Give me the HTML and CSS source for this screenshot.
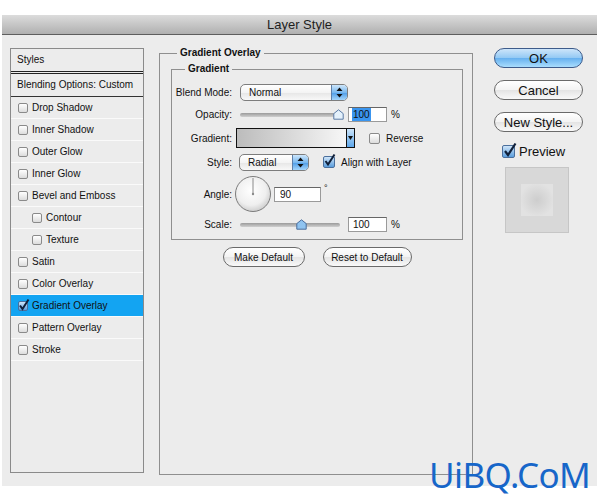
FILE: index.html
```html
<!DOCTYPE html>
<html lang="en">
<head>
    <meta charset="UTF-8">
    <meta name="viewport" content="width=device-width, initial-scale=1.0">
    <title>Layer Style</title>
    <link rel="stylesheet" href="styles.css">
</head>
<body>
    <div class="window">
        <div class="titlebar">Layer Style</div>
        <div class="content">

            <!-- Style list -->
            <div class="style-list">
                <div class="list-head">Styles</div>
                <div class="list-blend">Blending Options: Custom</div>
                <div class="list-item"><span class="check"></span>Drop Shadow</div>
                <div class="list-item"><span class="check"></span>Inner Shadow</div>
                <div class="list-item"><span class="check"></span>Outer Glow</div>
                <div class="list-item"><span class="check"></span>Inner Glow</div>
                <div class="list-item"><span class="check"></span>Bevel and Emboss</div>
                <div class="list-item sub"><span class="check"></span>Contour</div>
                <div class="list-item sub"><span class="check"></span>Texture</div>
                <div class="list-item"><span class="check"></span>Satin</div>
                <div class="list-item"><span class="check"></span>Color Overlay</div>
                <div class="list-item selected">
                    <span class="check on">
                        <svg width="12" height="13" viewBox="0 0 12 13"><path d="M2 7.5L4.5 11L10.5 1.5" fill="none" stroke="#10203a" stroke-width="2"/></svg>
                    </span>Gradient Overlay
                </div>
                <div class="list-item"><span class="check"></span>Pattern Overlay</div>
                <div class="list-item"><span class="check"></span>Stroke</div>
            </div>

            <!-- Gradient overlay settings -->
            <fieldset class="group outer">
                <legend>Gradient Overlay</legend>
                <fieldset class="group inner">
                    <legend>Gradient</legend>

                    <div class="row r-blend">
                        <span class="label">Blend Mode:</span>
                        <div class="select blend-select">
                            <span class="select-text">Normal</span>
                            <span class="stepper">
                                <svg width="7" height="11" viewBox="0 0 7 11"><path d="M3.5 0.5L6.5 4H0.5Z M3.5 10.5L6.5 7H0.5Z" fill="#111"/></svg>
                            </span>
                        </div>
                    </div>

                    <div class="row r-opacity">
                        <span class="label">Opacity:</span>
                        <div class="slider">
                            <span class="thumb" style="left: 93px">
                                <svg width="11" height="11" viewBox="0 0 11 11"><path d="M5.5 0.8L10.2 4.6V10.2H0.8V4.6Z" fill="#e4f1fc" stroke="#5a7aa5"/></svg>
                            </span>
                        </div>
                        <div class="field"><span class="selected-text">100</span></div>
                        <span class="unit">%</span>
                    </div>

                    <div class="row r-gradient">
                        <span class="label">Gradient:</span>
                        <div class="swatch">
                            <span class="swatch-arrow">
                                <svg width="5" height="4" viewBox="0 0 5 4"><path d="M0 0H5L2.5 4Z" fill="#111"/></svg>
                            </span>
                        </div>
                        <span class="check row-check"></span>
                        <span class="check-label">Reverse</span>
                    </div>

                    <div class="row r-style">
                        <span class="label">Style:</span>
                        <div class="select style-select">
                            <span class="select-text">Radial</span>
                            <span class="stepper">
                                <svg width="7" height="11" viewBox="0 0 7 11"><path d="M3.5 0.5L6.5 4H0.5Z M3.5 10.5L6.5 7H0.5Z" fill="#111"/></svg>
                            </span>
                        </div>
                        <span class="check on row-check align-check">
                            <svg width="13" height="14" viewBox="0 0 13 14"><path d="M2.5 8L5 11.5L11.5 1.5" fill="none" stroke="#10203a" stroke-width="2"/></svg>
                        </span>
                        <span class="check-label">Align with Layer</span>
                    </div>

                    <div class="row r-angle">
                        <span class="label">Angle:</span>
                        <svg class="dial" width="38" height="38" viewBox="0 0 38 38">
                            <defs>
                                <radialGradient id="dialFill" cx="0.45" cy="0.4" r="0.6">
                                    <stop offset="0" stop-color="#ffffff"/>
                                    <stop offset="0.7" stop-color="#efefef"/>
                                    <stop offset="1" stop-color="#cfcfcf"/>
                                </radialGradient>
                            </defs>
                            <circle cx="19" cy="19" r="17.5" fill="url(#dialFill)" stroke="#7c7c7c"/>
                            <line x1="19" y1="19" x2="19" y2="3" stroke="#8a8a8a"/>
                            <circle cx="19" cy="19" r="1.2" fill="#8a8a8a"/>
                        </svg>
                        <div class="field angle-field">90</div>
                        <span class="degree">°</span>
                    </div>

                    <div class="row r-scale">
                        <span class="label">Scale:</span>
                        <div class="slider">
                            <span class="thumb" style="left: 56px">
                                <svg width="11" height="11" viewBox="0 0 11 11"><path d="M5.5 0.8L10.2 4.6V10.2H0.8V4.6Z" fill="#8fc3f0" stroke="#4a6d9c"/></svg>
                            </span>
                        </div>
                        <div class="field">100</div>
                        <span class="unit">%</span>
                    </div>
                </fieldset>

                <div class="default-buttons">
                    <button class="pill make">Make Default</button>
                    <button class="pill reset">Reset to Default</button>
                </div>
            </fieldset>

            <!-- Dialog buttons -->
            <div class="actions">
                <button class="pill big ok">OK</button>
                <button class="pill big">Cancel</button>
                <button class="pill big">New Style...</button>
                <div class="preview-check">
                    <span class="check on big-check">
                        <svg width="15" height="16" viewBox="0 0 15 16"><path d="M3 9L6 13L13.5 1.5" fill="none" stroke="#10203a" stroke-width="2.2"/></svg>
                    </span>
                    <span>Preview</span>
                </div>
                <div class="preview">
                    <div class="preview-inner"></div>
                </div>
            </div>
        </div>
    </div>

    <div class="watermark">UiBQ.CoM</div>
</body>
</html>
```

FILE: styles.css
```css
body {
    margin: 0;
    background: #fff;
    font-family: "Liberation Sans", Arial, sans-serif;
    font-size: 10px;
    color: #111;
}
.window {
    margin: 15px 3px 0 2px;
    height: 471px;
    background: #ececec;
    display: flex;
    flex-direction: column;
}
.titlebar {
    height: 19px;
    line-height: 19px;
    text-align: center;
    font-size: 13px;
    color: #1e1e1e;
    background: linear-gradient(#dcdcdc, #b0b0b0);
    border-bottom: 1px solid #5e5e5e;
}
.content {
    flex: 1;
    display: flex;
    align-items: flex-start;
    padding: 13px 0 0 8px;
}

/* style list */
.style-list {
    width: 132px;
    height: 423px;
    border: 1px solid #8a8a8a;
    flex-shrink: 0;
}
.list-head {
    height: 22px;
    line-height: 22px;
    padding-left: 6px;
    border-bottom: 3px double #222;
}
.list-blend {
    height: 22px;
    line-height: 22px;
    padding-left: 6px;
    border-bottom: 1px solid #333;
}
.list-item {
    height: 21px;
    display: flex;
    align-items: center;
    padding-left: 7px;
    border-bottom: 1px solid #fafafa;
}
.list-item.sub {
    padding-left: 21px;
}
.list-item.selected {
    background: #13a4f2;
}
.check {
    width: 10px;
    height: 10px;
    box-sizing: border-box;
    border: 1px solid #8a8a8a;
    border-radius: 2px;
    background: linear-gradient(#fff, #dcdcdc);
    margin-right: 4px;
    flex-shrink: 0;
    position: relative;
}
.check.on {
    background: linear-gradient(#cfe5f9, #5b9edd);
    border-color: #4b6f9c;
}
.check svg {
    position: absolute;
    left: -1px;
    top: -4px;
}

/* group boxes */
.group {
    border: 1px solid #8f8f8f;
    margin: 0;
    min-width: 0;
}
.group legend {
    font-weight: bold;
    line-height: 12px;
    padding: 0 3px;
}
.outer {
    box-sizing: border-box;
    width: 314px;
    height: 428px;
    margin: -1px 0 0 15px;
    padding: 4px 9px 0 11px;
    flex-shrink: 0;
}
.outer > legend {
    margin-left: 6px;
}
.inner {
    padding: 8px 0 8px 0;
    display: flex;
    flex-direction: column;
    gap: 4px;
}
.inner > legend {
    margin-left: 13px;
}
.row {
    display: flex;
    align-items: center;
    height: 18px;
}
.r-gradient {
    height: 22px;
}
.r-angle {
    height: 38px;
}
.r-scale {
    height: 14px;
}
.label {
    width: 60px;
    text-align: right;
    flex-shrink: 0;
}

/* selects */
.select {
    display: flex;
    align-items: center;
    box-sizing: border-box;
    height: 17px;
    margin-left: 8px;
    border: 1px solid #7d7d7d;
    border-radius: 5px;
    background: linear-gradient(#fff, #f4f4f4 50%, #e6e6e6 51%, #f8f8f8);
    overflow: hidden;
}
.blend-select {
    width: 108px;
}
.style-select {
    width: 70px;
    margin-left: 7px;
}
.select-text {
    flex: 1;
    padding-left: 8px;
}
.stepper {
    width: 15px;
    height: 100%;
    display: flex;
    align-items: center;
    justify-content: center;
    border-left: 1px solid #5d7fa9;
    background: linear-gradient(#cde6fb, #79b8ef 50%, #4c9be6 51%, #a5d6fc);
}

/* sliders */
.slider {
    position: relative;
    width: 100px;
    height: 11px;
    margin-left: 8px;
}
.slider::before {
    content: "";
    position: absolute;
    left: 0;
    right: 0;
    top: 4px;
    height: 4px;
    border-radius: 2px;
    background: linear-gradient(#9a9a9a, #cfcfcf);
}
.thumb {
    position: absolute;
    top: 0;
    width: 11px;
    height: 11px;
}
.thumb svg {
    display: block;
}

/* text fields */
.field {
    box-sizing: border-box;
    width: 39px;
    height: 15px;
    line-height: 13px;
    margin-left: 8px;
    padding-left: 4px;
    background: #fff;
    border: 1px solid #9a9a9a;
    border-top-color: #666;
}
.selected-text {
    background: #3a95ef;
    display: inline-block;
    padding: 0 1px;
    margin-left: -1px;
}
.unit {
    margin-left: 4px;
}
.angle-field {
    width: 47px;
    margin-left: 2px;
    padding-left: 5px;
}
.degree {
    align-self: flex-start;
    margin: 8px 0 0 3px;
    font-size: 9px;
}
.dial {
    margin-left: 2px;
    flex-shrink: 0;
}

/* gradient swatch */
.swatch {
    width: 119px;
    height: 20px;
    box-sizing: border-box;
    margin-left: 4px;
    border: 1px solid #111;
    background: linear-gradient(to right, #bcbcbc, #fbfbfb);
    display: flex;
    justify-content: flex-end;
}
.swatch-arrow {
    width: 7px;
    border-left: 1px solid #111;
    background: linear-gradient(#cde6fb, #5ea7ea);
    display: flex;
    align-items: center;
    justify-content: center;
}
.row-check {
    width: 11px;
    height: 11px;
    margin-left: 14px;
}
.align-check {
    width: 12px;
    height: 12px;
    margin-left: 14px;
}
.check-label {
    margin-left: 2px;
}

/* pill buttons */
.pill {
    box-sizing: border-box;
    height: 20px;
    padding: 0;
    border: 1px solid #6a6a6a;
    border-radius: 10px;
    background: linear-gradient(#fff, #f3f3f3 50%, #e4e4e4 51%, #f9f9f9);
    font-family: "Liberation Sans", Arial, sans-serif;
    font-size: 10px;
    color: #111;
}
.default-buttons {
    display: flex;
    justify-content: center;
    gap: 18px;
    margin-top: 7px;
}
.make {
    width: 82px;
}
.reset {
    width: 89px;
}

.actions {
    width: 89px;
    margin-left: 21px;
    display: flex;
    flex-direction: column;
}
.pill.big {
    font-size: 13px;
    margin-bottom: 12px;
}
.pill.ok {
    border-color: #3d5b8a;
    background: linear-gradient(#cde5fa, #93c9f4 50%, #66b0ef 51%, #a9ddfd);
}
.preview-check {
    display: flex;
    align-items: center;
    height: 14px;
    margin-top: 0;
    padding-left: 8px;
    font-size: 13px;
}
.big-check {
    width: 13px;
    height: 13px;
    margin-right: 4px;
}
.big-check svg {
    top: -4px;
}
.preview {
    box-sizing: border-box;
    width: 64px;
    height: 66px;
    margin: 9px 0 0 11px;
    background: #d8d8d8;
    border: 1px solid #c6c6c6;
    display: flex;
    align-items: center;
    justify-content: center;
}
.preview-inner {
    width: 32px;
    height: 32px;
    background: radial-gradient(circle, #cdcdcd, #e2e2e2 75%);
}

.watermark {
    position: absolute;
    left: 429px;
    top: 451px;
    font-family: "Noto Sans", sans-serif;
    font-size: 35px;
    color: #1766c9;
    letter-spacing: -0.6px;
}
```
